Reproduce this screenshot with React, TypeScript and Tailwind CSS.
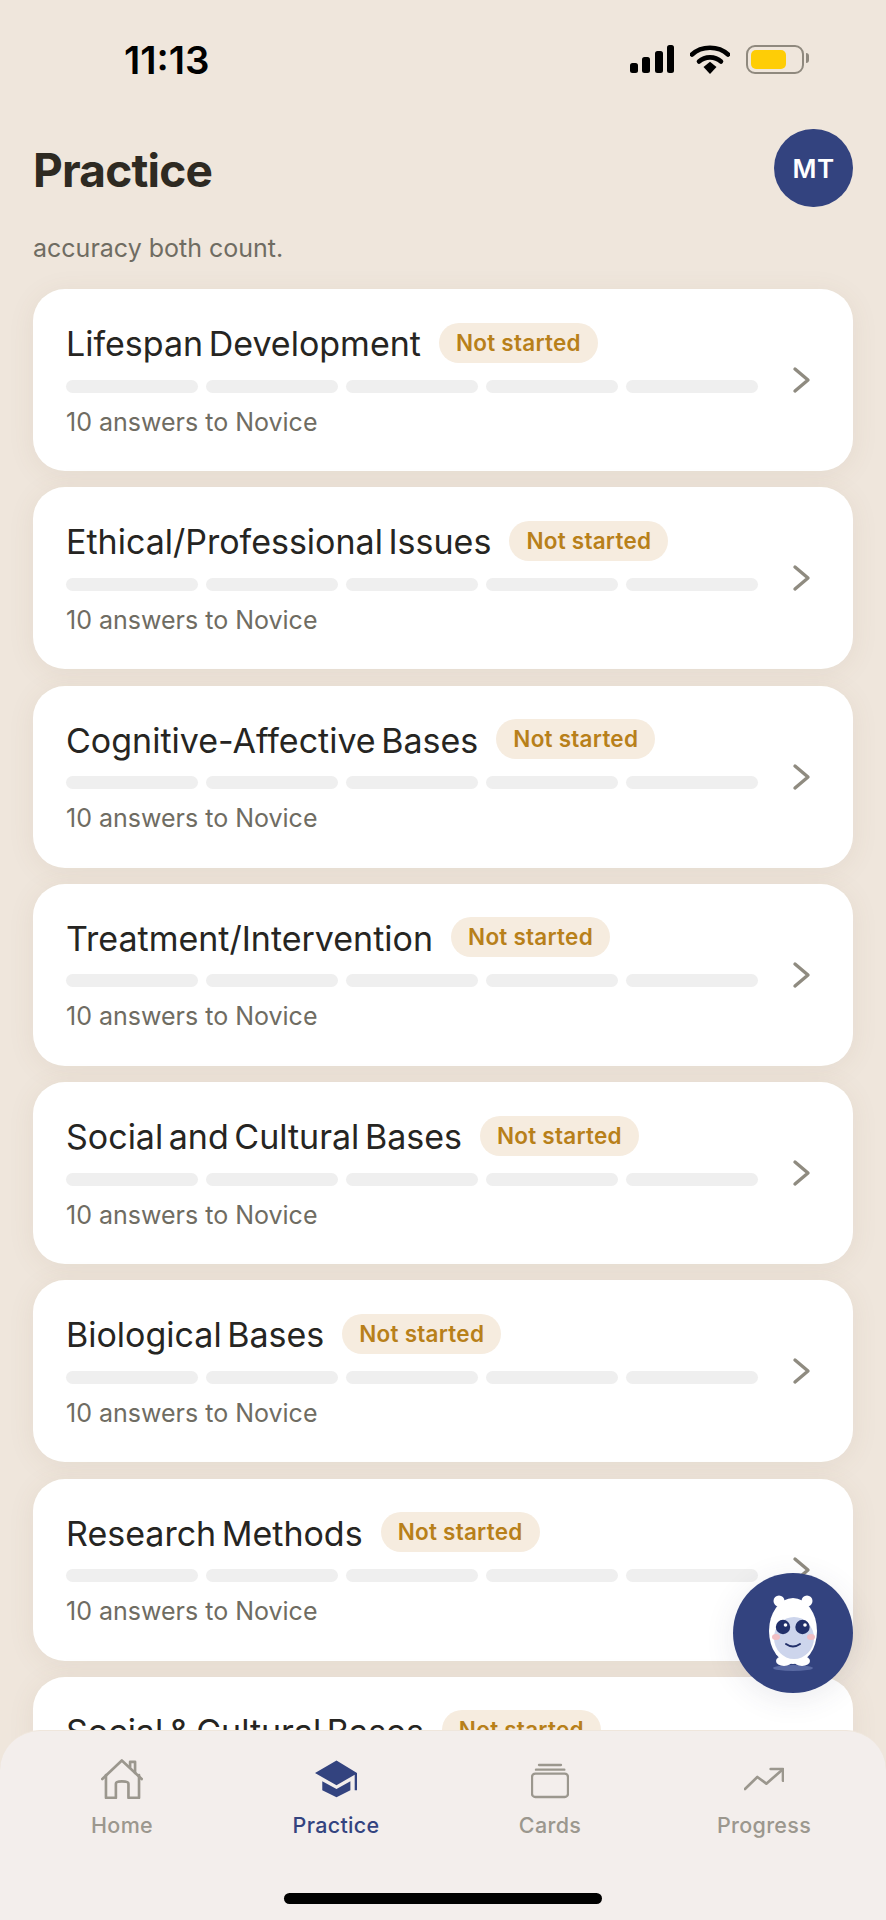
const topics = [
  "Lifespan Development",
  "Ethical/Professional Issues",
  "Cognitive-Affective Bases",
  "Treatment/Intervention",
  "Social and Cultural Bases",
  "Biological Bases",
  "Research Methods",
  "Social & Cultural Bases",
];

function Card({ title }: { title: string }) {
  return (
    <div className="flex h-[182px] shrink-0 items-center rounded-[32px] bg-white pl-[33px] pr-[34px] shadow-[0_4px_28px_rgba(120,90,60,0.08)]">
      <div className="w-[692px]">
        <div className="flex h-[40px] items-center gap-[18px]">
          <span className="pt-[2px] text-[34px] font-normal tracking-[0px] text-[#262522] [word-spacing:-4px]">{title}</span>
          <span className="flex h-[40px] items-center rounded-full bg-[#f6ecdf] px-[17px] text-[22.5px] font-semibold tracking-[0.25px] text-[#b8801a]">Not started</span>
        </div>
        <div className="mt-[17px] flex gap-[8px]">
          {[0, 1, 2, 3, 4].map((i) => (
            <div key={i} className="h-[13px] flex-1 rounded-full bg-[#efefef]" />
          ))}
        </div>
        <div className="mt-[13px] text-[25px] leading-[32px] text-[#6f6c62]">10 answers to Novice</div>
      </div>
      <svg className="ml-[34px]" width="20" height="28" viewBox="0 0 20 28" fill="none">
        <path d="M3 3l13 11L3 25" stroke="#8f8b80" strokeWidth="3.4" strokeLinecap="round" strokeLinejoin="round" />
      </svg>
    </div>
  );
}

function StatusIcons() {
  return (
    <div className="flex items-center">
      <svg width="44" height="28" viewBox="0 0 44 28">
        <rect x="0" y="18" width="8" height="10" rx="2.5" fill="#000" />
        <rect x="12" y="12" width="8" height="16" rx="2.5" fill="#000" />
        <rect x="25" y="6" width="8" height="22" rx="2.5" fill="#000" />
        <rect x="37" y="0" width="7" height="28" rx="2.5" fill="#000" />
      </svg>
      <svg className="ml-[16px]" width="40" height="30" viewBox="0 0 40 30" fill="none">
        <path d="M2 10.5C11.5 1.5 28.5 1.5 38 10.5" stroke="#000" strokeWidth="4.6" strokeLinecap="round" />
        <path d="M9 17.5C15 12 25 12 31 17.5" stroke="#000" strokeWidth="4.6" strokeLinecap="round" />
        <path d="M13.5 23L20 17.8 26.5 23 20 30Z" fill="#000" />
      </svg>
      <div className="relative ml-[16px] h-[29px] w-[58px] rounded-[9px] border-[2.5px] border-[#8f897e] p-[3px]">
        <div className="h-full w-[35px] rounded-[5px] bg-[#fecd06]" />
        <div className="absolute right-[-7px] top-[6px] h-[10px] w-[3px] rounded-r-full bg-[#8f897e]" />
      </div>
    </div>
  );
}

function Mascot() {
  return (
    <svg width="120" height="120" viewBox="0 0 120 120">
      <circle cx="60" cy="60" r="60" fill="#33437f" />
      <ellipse cx="60" cy="95" rx="20" ry="3" fill="#5a6aa3" />
      <circle cx="46" cy="28" r="5.5" fill="#fff" />
      <circle cx="74" cy="28" r="5.5" fill="#fff" />
      <ellipse cx="60" cy="58" rx="24" ry="33" fill="#fff" />
      <ellipse cx="51" cy="88" rx="8" ry="5" fill="#fff" />
      <ellipse cx="69" cy="88" rx="8" ry="5" fill="#fff" />
      <ellipse cx="61" cy="65" rx="20" ry="21" fill="#cdd5ec" />
      <ellipse cx="43" cy="64" rx="4" ry="3" fill="#f2bfc4" />
      <ellipse cx="78" cy="64" rx="4" ry="3" fill="#f2bfc4" />
      <circle cx="50" cy="54" r="7.2" fill="#22306a" />
      <circle cx="69.5" cy="54" r="7.2" fill="#22306a" />
      <circle cx="52.5" cy="52" r="1.8" fill="#fff" />
      <circle cx="72" cy="52" r="1.8" fill="#fff" />
      <path d="M53 71Q60 76 67 71" stroke="#22306a" strokeWidth="2" fill="none" strokeLinecap="round" />
    </svg>
  );
}

function TabBar() {
  const gray = "#9b978e";
  return (
    <nav className="absolute bottom-0 left-0 h-[190px] w-full rounded-t-[40px] border-t border-[#efe6dc] bg-[#f3eeec] px-[15px] pt-[28px]">
      <div className="grid grid-cols-4 text-[21.5px] font-medium tracking-[0.3px] text-[#9b978e]">
        <div className="flex flex-col items-center">
          <svg className="h-[40px]" width="42" height="40" viewBox="125 118 127 120" fill="none" stroke={gray} strokeWidth="8" strokeLinecap="round" strokeLinejoin="round">
            <path d="M129 178L188 122 248 178" />
            <path d="M213 142V126H228V160" />
            <path d="M140 166V235H170V192Q170 185 188 185 208 185 208 192V235H240V166" />
          </svg>
          <span className="mt-[12px] leading-[28px]">Home</span>
        </div>
        <div className="flex flex-col items-center text-[#33437f]">
          <svg className="h-[40px]" width="43" height="40" viewBox="765 118 130 120" fill="#33437f">
            <path d="M830 122L765 160 830 197 885 165V212H892V160Z" />
            <path d="M787 185L830 208 872 185V212L830 233 787 212Z" />
          </svg>
          <span className="mt-[12px] leading-[28px]">Practice</span>
        </div>
        <div className="flex flex-col items-center">
          <svg className="h-[40px]" width="38" height="40" viewBox="92 112 114 120" fill="none" stroke={gray} strokeWidth="7" strokeLinecap="round">
            <rect x="95" y="156" width="108" height="70" rx="10" />
            <path d="M107 144H192" />
            <path d="M116 130H182" />
          </svg>
          <span className="mt-[12px] leading-[28px]">Cards</span>
        </div>
        <div className="flex flex-col items-center">
          <svg className="h-[40px]" width="40" height="40" viewBox="730 118 120 120" fill="none" stroke={gray} strokeWidth="8" strokeLinecap="round" strokeLinejoin="round">
            <path d="M733 208L770 172 797 192 845 150" />
            <path d="M810 148H847V183" />
          </svg>
          <span className="mt-[12px] leading-[28px]">Progress</span>
        </div>
      </div>
      <div className="absolute bottom-[16px] left-[284px] h-[11px] w-[318px] rounded-full bg-black" />
    </nav>
  );
}

export default function App() {
  return (
    <div className="relative h-[1920px] w-[886px] overflow-hidden bg-[#efe6dc] font-['Inter',sans-serif]">
      <div className="flex h-[120px] items-start justify-between pl-[124px] pr-[82px] pt-[40px]">
        <span className="text-[38.5px] font-semibold leading-[40px] text-black">11:13</span>
        <div className="pt-[4px]"><StatusIcons /></div>
      </div>
      <div className="flex h-[88px] items-center justify-between px-[33px] pt-[8px]">
        <h1 className="pt-[3px] text-[46px] font-bold leading-none tracking-[-0.8px] text-[#2e2a22]">Practice</h1>
        <div className="flex h-[78px] w-[79px] items-center justify-center rounded-full bg-[#33437f] text-[26px] font-semibold tracking-[0.5px] text-white">MT</div>
      </div>
      <p className="mt-[24px] px-[33px] text-[25px] leading-[32px] text-[#6f6c62]">accuracy both count.</p>
      <div className="mt-[25px] flex flex-col gap-[16.25px] px-[33px]">
        {topics.map((t) => (
          <Card key={t} title={t} />
        ))}
      </div>
      <TabBar />
      <div className="absolute left-[733px] top-[1573px] rounded-full shadow-[0_6px_30px_rgba(60,60,90,0.1)]">
        <Mascot />
      </div>
    </div>
  );
}
